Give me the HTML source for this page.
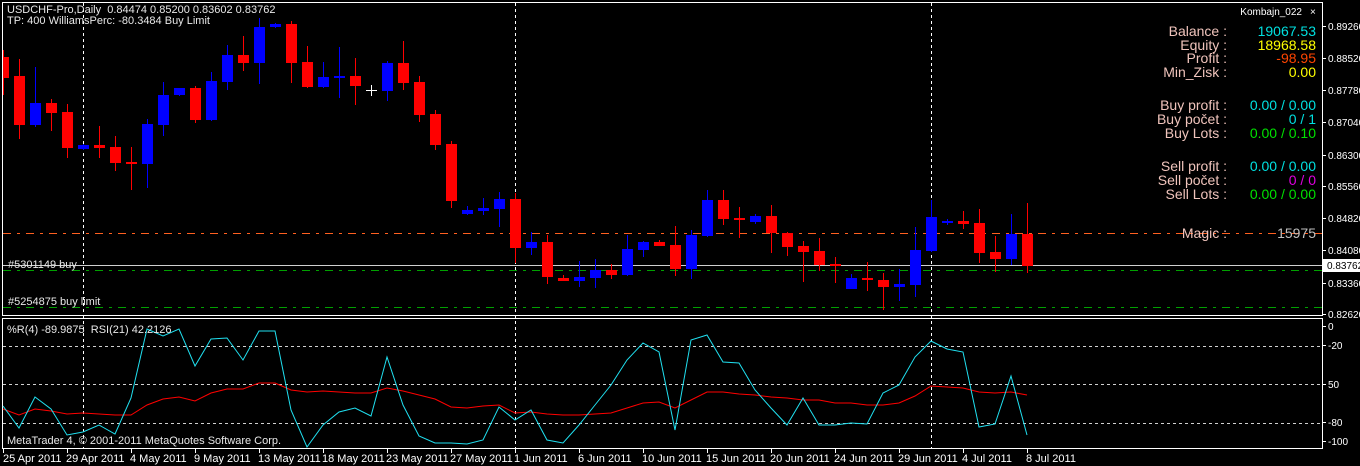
<!DOCTYPE html>
<html><head><meta charset="utf-8"><style>
html,body{margin:0;padding:0;background:#000;width:1360px;height:466px;overflow:hidden}
svg{display:block}
text{font-family:"Liberation Sans",sans-serif}
</style></head><body>
<svg width="1360" height="466" viewBox="0 0 1360 466" xmlns="http://www.w3.org/2000/svg">
<rect width="1360" height="466" fill="#000"/>
<rect x="2.5" y="2.5" width="1320" height="313" fill="none" stroke="#fff" stroke-width="1"/>
<rect x="2.5" y="318.5" width="1320" height="130" fill="none" stroke="#fff" stroke-width="1"/>
<g stroke="#fff" stroke-dasharray="3,3" stroke-width="1">
<path d="M83.5 3V448M515.5 3V448M931.5 3V448"/>
</g>
<path d="M3 233.5H1322" stroke="#ff6020" stroke-dasharray="8,6,3,6" stroke-width="1"/>
<path d="M3 265.5H1322" stroke="#d0d0d0" stroke-width="1"/>
<path d="M3 270.5H1322" stroke="#00a000" stroke-dasharray="8,6,3,6" stroke-width="1"/>
<path d="M3 307.5H1322" stroke="#00a000" stroke-dasharray="8,6,3,6" stroke-width="1"/>
<g stroke="#ff0000" stroke-width="1" fill="none">
<path d="M3.5 50V95M19.5 59V139M51.5 99V131M67.5 104V158M99.5 126V158M115.5 136V171M131.5 147V190M195.5 86V123M243.5 36V71M291.5 21V83M307.5 46V88M355.5 58V105M403.5 41V90M419.5 76V122M435.5 110V150M451.5 141V208M515.5 193V263M547.5 235V284M563.5 275V281M611.5 264V279M659.5 240V246M675.5 226V276M723.5 190V225M739.5 207V238M771.5 205V253M787.5 232V256M803.5 241V282M819.5 238V271M835.5 257V283M867.5 262V291M883.5 273V310M963.5 211V229M979.5 209V263M995.5 236V272M1027.5 203V273"/>
</g>
<g stroke="#0000ff" stroke-width="1" fill="none">
<path d="M35.5 67V127M83.5 144V150M147.5 119V188M163.5 82V136M179.5 88V96M211.5 72V121M227.5 45V90M259.5 18V84M275.5 23V28M323.5 62V88M339.5 47V98M387.5 61V101M467.5 206V215M483.5 198V215M499.5 192V227M531.5 232V255M579.5 261V287M595.5 259V288M627.5 235V276M643.5 241V257M691.5 230V279M707.5 190V237M755.5 214V224M851.5 274V289M899.5 269V301M915.5 227V297M931.5 200V252M947.5 219V225M1011.5 214V265"/>
</g>
<g fill="#ff0000">
<rect x="3" y="57" width="6" height="21"/>
<rect x="14" y="76" width="11" height="49"/>
<rect x="46" y="103" width="11" height="10"/>
<rect x="62" y="112" width="11" height="36"/>
<rect x="94" y="145" width="11" height="3"/>
<rect x="110" y="147" width="11" height="16"/>
<rect x="126" y="162" width="11" height="2"/>
<rect x="190" y="88" width="11" height="32"/>
<rect x="238" y="55" width="11" height="8"/>
<rect x="286" y="24" width="11" height="39"/>
<rect x="302" y="62" width="11" height="25"/>
<rect x="350" y="76" width="11" height="10"/>
<rect x="398" y="63" width="11" height="20"/>
<rect x="414" y="82" width="11" height="33"/>
<rect x="430" y="114" width="11" height="31"/>
<rect x="446" y="144" width="11" height="57"/>
<rect x="510" y="199" width="11" height="49"/>
<rect x="542" y="242" width="11" height="35"/>
<rect x="558" y="278" width="11" height="3"/>
<rect x="606" y="270" width="11" height="5"/>
<rect x="654" y="242" width="11" height="4"/>
<rect x="670" y="245" width="11" height="24"/>
<rect x="718" y="200" width="11" height="19"/>
<rect x="734" y="218" width="11" height="2"/>
<rect x="766" y="216" width="11" height="17"/>
<rect x="782" y="233" width="11" height="14"/>
<rect x="798" y="246" width="11" height="6"/>
<rect x="814" y="251" width="11" height="14"/>
<rect x="830" y="264" width="11" height="2"/>
<rect x="862" y="278" width="11" height="2"/>
<rect x="878" y="280" width="11" height="7"/>
<rect x="958" y="221" width="11" height="3"/>
<rect x="974" y="223" width="11" height="30"/>
<rect x="990" y="252" width="11" height="7"/>
<rect x="1022" y="234" width="11" height="32"/>
</g>
<g fill="#0000ff">
<rect x="30" y="103" width="11" height="22"/>
<rect x="78" y="145" width="11" height="4"/>
<rect x="142" y="124" width="11" height="40"/>
<rect x="158" y="95" width="11" height="30"/>
<rect x="174" y="88" width="11" height="7"/>
<rect x="206" y="81" width="11" height="39"/>
<rect x="222" y="55" width="11" height="27"/>
<rect x="254" y="27" width="11" height="36"/>
<rect x="270" y="24" width="11" height="3"/>
<rect x="318" y="77" width="11" height="10"/>
<rect x="334" y="76" width="11" height="2"/>
<rect x="382" y="63" width="11" height="28"/>
<rect x="462" y="210" width="11" height="4"/>
<rect x="478" y="208" width="11" height="3"/>
<rect x="494" y="199" width="11" height="10"/>
<rect x="526" y="242" width="11" height="6"/>
<rect x="574" y="277" width="11" height="4"/>
<rect x="590" y="270" width="11" height="8"/>
<rect x="622" y="249" width="11" height="26"/>
<rect x="638" y="242" width="11" height="8"/>
<rect x="686" y="235" width="11" height="34"/>
<rect x="702" y="200" width="11" height="36"/>
<rect x="750" y="216" width="11" height="6"/>
<rect x="846" y="278" width="11" height="11"/>
<rect x="894" y="284" width="11" height="3"/>
<rect x="910" y="250" width="11" height="35"/>
<rect x="926" y="217" width="11" height="34"/>
<rect x="942" y="221" width="11" height="2"/>
<rect x="1006" y="234" width="11" height="25"/>
</g>
<path d="M366 90.5H377M371.5 85V96" stroke="#fff" stroke-width="1"/>
<text x="7" y="13" font-size="11" fill="#e8e8e8" xml:space="preserve">USDCHF-Pro,Daily  0.84474 0.85200 0.83602 0.83762</text>
<text x="7" y="24" font-size="11" fill="#e8e8e8">TP: 400 WilliamsPerc: -80.3484 Buy Limit</text>
<text x="8" y="268" font-size="11" fill="#e8e8e8">#5301149 buy</text>
<text x="8" y="305" font-size="11" fill="#e8e8e8">#5254875 buy limit</text>
<text x="1302" y="15" font-size="10" fill="#fff" text-anchor="end">Kombajn_022</text>
<text x="1310" y="15" font-size="10" fill="#fff">×</text>
<g font-size="14" fill="#f0c4bc" text-anchor="end">
<text x="1227" y="36">Balance :</text>
<text x="1227" y="50">Equity :</text>
<text x="1227" y="63">Profit :</text>
<text x="1227" y="77">Min_Zisk :</text>
<text x="1227" y="110">Buy profit  :</text>
<text x="1227" y="124">Buy počet :</text>
<text x="1227" y="138">Buy Lots  :</text>
<text x="1227" y="171">Sell profit :</text>
<text x="1227" y="185">Sell počet :</text>
<text x="1227" y="199">Sell Lots :</text>
<text x="1227" y="238">Magic :</text>
</g>
<g font-size="14" text-anchor="end">
<text x="1316" y="36" fill="#00e0e0">19067.53</text>
<text x="1316" y="50" fill="#ffff00">18968.58</text>
<text x="1316" y="63" fill="#ff4500">-98.95</text>
<text x="1316" y="77" fill="#ffff00">0.00</text>
<text x="1316" y="110" fill="#00e0e0">0.00 / 0.00</text>
<text x="1316" y="124" fill="#00e0e0">0 / 1</text>
<text x="1316" y="138" fill="#00e000">0.00 / 0.10</text>
<text x="1316" y="171" fill="#00e0e0">0.00 / 0.00</text>
<text x="1316" y="185" fill="#e000e0">0 / 0</text>
<text x="1316" y="199" fill="#00e000">0.00 / 0.00</text>
<text x="1316" y="238" fill="#c0c0c0">15975</text>
</g>
<g stroke="#fff" stroke-width="1">
<path d="M1323 26.5h3M1323 58.5h3M1323 90.5h3M1323 122.5h3M1323 155.5h3M1323 186.5h3M1323 218.5h3M1323 250.5h3M1323 283.5h3M1323 314.5h3M1323 326.5h3M1323 345.5h3M1323 384.5h3M1323 422.5h3M1323 441.5h3"/>
</g>
<g font-size="10" fill="#fff">
<text x="1328" y="30">0.89260</text>
<text x="1328" y="62">0.88520</text>
<text x="1328" y="94">0.87780</text>
<text x="1328" y="126">0.87040</text>
<text x="1328" y="159">0.86300</text>
<text x="1328" y="190">0.85560</text>
<text x="1328" y="222">0.84820</text>
<text x="1328" y="254">0.84080</text>
<text x="1328" y="287">0.83360</text>
<text x="1328" y="318">0.82620</text>
<text x="1328" y="330">0</text>
<text x="1328" y="349">-20</text>
<text x="1328" y="388">50</text>
<text x="1328" y="426">-80</text>
<text x="1328" y="445">-100</text>
</g>
<rect x="1323" y="259" width="37" height="13" fill="#fff"/>
<text x="1327" y="269" font-size="10" fill="#000">0.83762</text>
<g stroke="#d0d0d0" stroke-dasharray="3,3" stroke-width="1">
<path d="M3 346.5H1322M3 384.5H1322M3 423.5H1322"/>
</g>
<polyline fill="none" stroke="#ff0000" stroke-width="1" points="3,409 19,415 35,409 51,411 67,414 83,413 99,414 115,415 131,415 147,405 163,399 179,397 195,401 211,393 227,389 243,389 259,383 275,383 291,390 307,392 323,391 339,392 355,393 371,393 387,388 403,391 419,395 435,399 451,407 467,408 483,406 499,405 515,413 531,412 547,414 563,415 579,415 595,414 611,413 627,408 643,403 659,402 675,408 691,400 707,392 723,392 739,394 755,395 771,397 787,398 803,400 819,400 835,403 851,403 867,405 883,405 899,403 915,396 931,386 947,387 963,388 979,392 995,393 1011,392 1027,395"/>
<polyline fill="none" stroke="#20e0f0" stroke-width="1" points="3,406 19,428 35,397 51,409 67,435 83,432 99,425 115,434 131,398 147,329 163,336 179,329 195,366 211,339 227,338 243,360 259,331 275,331 291,410 307,447 323,425 339,412 355,408 371,416 387,357 403,405 419,436 435,443 451,443 467,444 483,440 499,407 515,420 531,410 547,440 563,443 579,425 595,405 611,385 627,360 643,343 659,352 675,430 691,340 707,335 723,362 739,363 755,390 771,408 787,425 803,398 819,425 835,425 851,423 867,424 883,393 899,385 915,357 931,341 947,349 963,352 979,427 995,424 1011,376 1027,435"/>
<text x="7" y="333" font-size="11" fill="#e8e8e8" xml:space="preserve">%R(4) -89.9875  RSI(21) 42.2126</text>
<text x="7" y="444" font-size="11" fill="#e8e8e8">MetaTrader 4, © 2001-2011 MetaQuotes Software Corp.</text>
<g stroke="#fff" stroke-width="1">
<path d="M3.5 449v4M67.5 449v4M131.5 449v4M195.5 449v4M259.5 449v4M323.5 449v4M387.5 449v4M451.5 449v4M515.5 449v4M579.5 449v4M643.5 449v4M707.5 449v4M771.5 449v4M835.5 449v4M899.5 449v4M963.5 449v4M1027.5 449v4"/>
</g>
<g font-size="11" fill="#fff">
<text x="3" y="462">25 Apr 2011</text>
<text x="66" y="462">29 Apr 2011</text>
<text x="130" y="462">4 May 2011</text>
<text x="194" y="462">9 May 2011</text>
<text x="258" y="462">13 May 2011</text>
<text x="322" y="462">18 May 2011</text>
<text x="386" y="462">23 May 2011</text>
<text x="450" y="462">27 May 2011</text>
<text x="514" y="462">1 Jun 2011</text>
<text x="578" y="462">6 Jun 2011</text>
<text x="642" y="462">10 Jun 2011</text>
<text x="706" y="462">15 Jun 2011</text>
<text x="770" y="462">20 Jun 2011</text>
<text x="834" y="462">24 Jun 2011</text>
<text x="898" y="462">29 Jun 2011</text>
<text x="962" y="462">4 Jul 2011</text>
<text x="1026" y="462">8 Jul 2011</text>
</g>
</svg>
</body></html>
